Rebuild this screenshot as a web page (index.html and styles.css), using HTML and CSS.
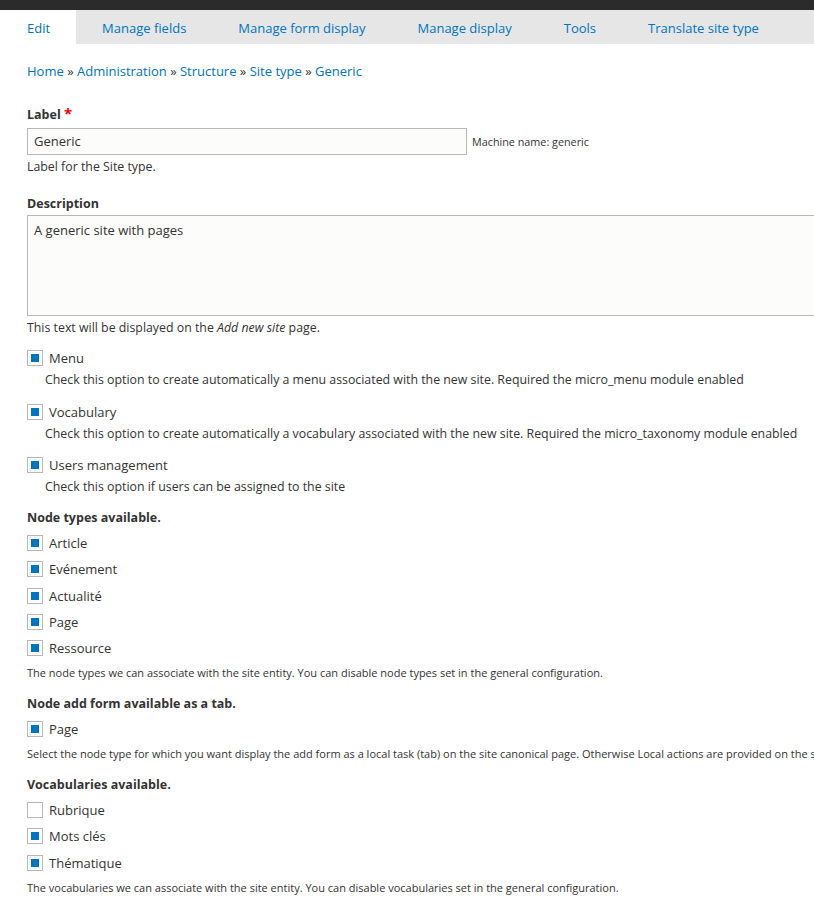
FILE: index.html
```html
<!DOCTYPE html>
<html>
<head>
<meta charset="utf-8">
<link rel="stylesheet" href="styles.css">
</head>
<body>
<div class="toolbar"></div>
<nav class="tabs">
  <a class="tab active">Edit</a>
  <a class="tab">Manage fields</a>
  <a class="tab">Manage form display</a>
  <a class="tab">Manage display</a>
  <a class="tab">Tools</a>
  <a class="tab">Translate site type</a>
</nav>
<main class="page">
  <div class="breadcrumb"><a>Home</a> » <a>Administration</a> » <a>Structure</a> » <a>Site type</a> » <a>Generic</a></div>

  <div class="item">
    <label class="label">Label <span class="req">*</span></label>
    <div class="input-row">
      <div class="input">Generic</div>
      <span class="machine">Machine name: generic</span>
    </div>
    <div class="help help-input">Label for the Site type.</div>
  </div>

  <div class="item item-desc">
    <label class="label label-ta">Description</label>
    <div class="textarea">A generic site with pages</div>
    <div class="help help-textarea">This text will be displayed on the <em>Add new site</em> page.</div>
  </div>

  <div class="check-block first">
    <div class="check"><span class="box on"></span><span class="check-label">Menu</span></div>
    <div class="help indent">Check this option to create automatically a menu associated with the new site. Required the micro_menu module enabled</div>
  </div>
  <div class="check-block">
    <div class="check"><span class="box on"></span><span class="check-label">Vocabulary</span></div>
    <div class="help indent">Check this option to create automatically a vocabulary associated with the new site. Required the micro_taxonomy module enabled</div>
  </div>
  <div class="check-block">
    <div class="check"><span class="box on"></span><span class="check-label">Users management</span></div>
    <div class="help indent">Check this option if users can be assigned to the site</div>
  </div>

  <div class="group">
    <div class="group-title">Node types available.</div>
    <div class="check list"><span class="box on"></span><span class="check-label">Article</span></div>
    <div class="check list"><span class="box on"></span><span class="check-label">Evénement</span></div>
    <div class="check list"><span class="box on"></span><span class="check-label">Actualité</span></div>
    <div class="check list"><span class="box on"></span><span class="check-label">Page</span></div>
    <div class="check list"><span class="box on"></span><span class="check-label">Ressource</span></div>
    <div class="help group-help">The node types we can associate with the site entity. You can disable node types set in the general configuration.</div>
  </div>

  <div class="group">
    <div class="group-title">Node add form available as a tab.</div>
    <div class="check list"><span class="box on"></span><span class="check-label">Page</span></div>
    <div class="help group-help">Select the node type for which you want display the add form as a local task (tab) on the site canonical page. Otherwise Local actions are provided on the site canonical page.</div>
  </div>

  <div class="group">
    <div class="group-title">Vocabularies available.</div>
    <div class="check list"><span class="box"></span><span class="check-label">Rubrique</span></div>
    <div class="check list"><span class="box on"></span><span class="check-label">Mots clés</span></div>
    <div class="check list"><span class="box on"></span><span class="check-label">Thématique</span></div>
    <div class="help group-help last">The vocabularies we can associate with the site entity. You can disable vocabularies set in the general configuration.</div>
  </div>
</main>
</body>
</html>
```

FILE: styles.css
```css
html, body {
  margin: 0;
  padding: 0;
  overflow: hidden;
  background: #ffffff;
}
body {
  font-family: "Open Sans", "DejaVu Sans", sans-serif;
  color: #333333;
  width: 814px;
}
.toolbar {
  height: 10px;
  background: #2b2b2b;
}
.tabs {
  display: flex;
  height: 34px;
  background: #e6e6e6;
}
.tab {
  display: flex;
  align-items: center;
  padding: 1px 26px 0 26px;
  font-size: 13px;
  color: #0074bd;
  text-decoration: none;
  white-space: nowrap;
}
.tab.active {
  background: #ffffff;
  padding-left: 27px;
}
.page {
  width: 1200px;
  padding: 0 0 0 27px;
}
.breadcrumb {
  margin-top: 17px;
  font-size: 13px;
  line-height: 20px;
  color: #333;
}
.breadcrumb a {
  color: #0074bd;
}
.item {
  margin-top: 23px;
}
.item-desc {
  margin-top: 20px;
}
.label {
  display: block;
  font-size: 12.5px;
  font-weight: bold;
  line-height: 18px;
  margin-bottom: 4px;
}
.label-ta {
  margin-bottom: 2px;
}
.req {
  color: #e00;
  font-size: 15px;
}
.input-row {
  display: flex;
  align-items: center;
}
.input {
  box-sizing: border-box;
  width: 440px;
  height: 27px;
  border: 1px solid #b8b8b8;
  background: #fcfcfa;
  font-size: 13px;
  line-height: 25px;
  padding: 0 6px;
}
.machine {
  font-size: 10.8px;
  margin-left: 5px;
}
.help {
  font-size: 12.35px;
  line-height: 16px;
  white-space: nowrap;
}
.help-input {
  margin-top: 4px;
}
.textarea {
  box-sizing: border-box;
  width: 1000px;
  height: 101px;
  border: 1px solid #b8b8b8;
  background: #fcfcfa;
  font-size: 13px;
  line-height: 18px;
  padding: 5px 6px;
}
.help-textarea {
  margin-top: 4px;
}
.check-block {
  margin-top: 13.5px;
}
.check-block.first {
  margin-top: 12px;
}
.check-block .help {
  margin-top: 4px;
}
.check {
  display: flex;
  align-items: center;
  height: 20px;
}
.box {
  box-sizing: border-box;
  width: 16px;
  height: 16px;
  border: 1px solid #b8b8b8;
  background: #fff;
  display: flex;
  align-items: center;
  justify-content: center;
}
.box.on::after {
  content: "";
  width: 8px;
  height: 8px;
  background: #0074bd;
}
.check-label {
  font-size: 13px;
  margin-left: 6px;
}
.indent {
  padding-left: 18px;
}
.group {
  margin-top: 14px;
}
.group + .group {
  margin-top: 14px;
}
.group-title {
  font-size: 12.5px;
  font-weight: bold;
  line-height: 18px;
}
.check.list {
  margin-top: 6px;
}
.check.list + .check.list {
  margin-top: 6.25px;
}
.group-help {
  margin-top: 7px;
  font-size: 11px;
}
```
